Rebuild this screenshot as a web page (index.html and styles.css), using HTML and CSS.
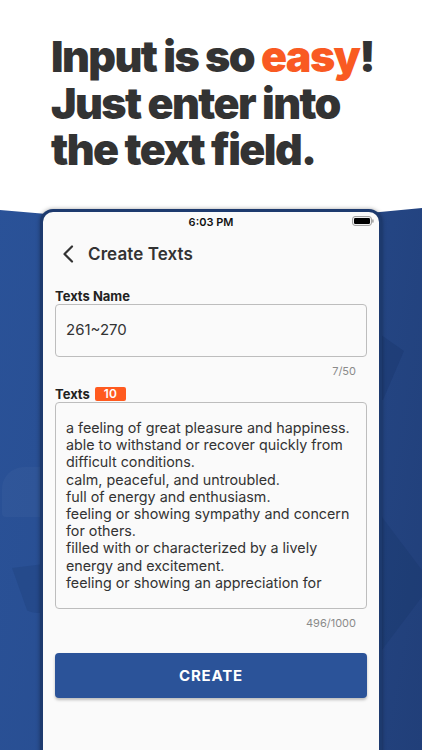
FILE: index.html
```html
<!DOCTYPE html>
<html lang="en">
<head>
<meta charset="utf-8">
<title>Create Texts</title>
<link rel="stylesheet" href="styles.css">
</head>
<body>
<div class="page">
  <h1 class="headline">Input is so <span class="accent">easy</span>!<br>Just enter into<br>the text field.</h1>
  <div class="stage">
    <div class="backdrop"></div>
    <div class="blob blob-a"></div>
    <div class="blob blob-b"></div>
    <div class="blob blob-c"></div>
    <div class="blob blob-d"></div>
    <div class="phone">
      <div class="status">
        <span class="time">6:03 PM</span>
        <svg class="battery" width="22" height="10" viewBox="0 0 22 10">
          <rect x="0.6" y="0.6" width="18.8" height="8.8" rx="2.4" fill="none" stroke="#999" stroke-width="1"/>
          <rect x="2" y="2" width="16" height="6" rx="1.2" fill="#000"/>
          <rect x="20.2" y="3.3" width="1.4" height="3.4" rx="0.6" fill="#999"/>
        </svg>
      </div>
      <div class="appbar">
        <svg class="back" width="12" height="18" viewBox="0 0 12 18">
          <path d="M10 1.5 L2.5 9 L10 16.5" fill="none" stroke="#333" stroke-width="2.2" stroke-linecap="round" stroke-linejoin="round"/>
        </svg>
        <span class="title">Create Texts</span>
      </div>
      <div class="form">
        <div class="label">Texts Name</div>
        <div class="field field-name">261~270</div>
        <div class="counter">7/50</div>
        <div class="label label-row">Texts <span class="badge">10</span></div>
        <div class="field field-area">a feeling of great pleasure and happiness.<br>able to withstand or recover quickly from difficult conditions.<br>calm, peaceful, and untroubled.<br>full of energy and enthusiasm.<br>feeling or showing sympathy and concern for others.<br>filled with or characterized by a lively energy and excitement.<br>feeling or showing an appreciation for</div>
        <div class="counter">496/1000</div>
        <div class="button">CREATE</div>
      </div>
    </div>
  </div>
</div>
</body>
</html>
```

FILE: styles.css
```css
html, body {
  margin: 0;
  padding: 0;
}
body {
  width: 422px;
  height: 750px;
  overflow: hidden;
  background: #ffffff;
  font-family: Inter, "Noto Sans", "Liberation Sans", sans-serif;
  color: #333333;
}
.page {
  width: 422px;
  height: 750px;
  display: flex;
  flex-direction: column;
}
.headline {
  flex-shrink: 0;
  margin: 0;
  padding: 33px 0 0 51px;
  height: 180px;
  box-sizing: border-box;
  font-family: Inter, "Liberation Sans", sans-serif;
  font-weight: 900;
  font-size: 43px;
  line-height: 46.5px;
  letter-spacing: -1.6px;
  color: #333333;
}
.accent {
  color: #f95a22;
}
.stage {
  position: relative;
  flex: 1;
  min-height: 0;
  padding-top: 29px;
}
.backdrop {
  position: absolute;
  left: 0;
  right: 0;
  top: 0;
  bottom: 0;
  background: linear-gradient(100deg, #2a5298 0%, #284d90 45%, #213f79 100%);
  clip-path: polygon(0 30px, 50% 48px, 100% 28px, 100% 100%, 0 100%);
}
.blob {
  position: absolute;
}
.blob-a {
  left: 2px;
  top: 287px;
  width: 60px;
  height: 50px;
  border-radius: 22px 0 0 4px;
  background: rgba(255, 255, 255, 0.03);
}
.blob-b {
  left: 12px;
  top: 383px;
  width: 40px;
  height: 50px;
  border-radius: 0 0 0 26px;
  background: rgba(10, 30, 70, 0.12);
  clip-path: polygon(0 10%, 100% 0, 100% 100%, 40% 100%);
}
.blob-c {
  right: 18px;
  top: 150px;
  width: 30px;
  height: 70px;
  background: rgba(10, 30, 70, 0.14);
  clip-path: polygon(0 0, 100% 30%, 30% 100%, 0 100%);
}
.blob-d {
  right: 0;
  top: 337px;
  width: 40px;
  height: 133px;
  background: rgba(10, 30, 70, 0.12);
  clip-path: polygon(0 0, 100% 40%, 100% 60%, 0 100%);
}
.phone {
  position: relative;
  margin-left: 40px;
  width: 342px;
  height: 560px;
  box-sizing: border-box;
  border: 3px solid #1d3a6e;
  border-bottom: none;
  border-radius: 13px 13px 0 0;
  background: #fafafa;
  box-shadow: 0 0 4px rgba(0, 0, 0, 0.35);
}
.status {
  height: 20px;
  display: flex;
  align-items: center;
  justify-content: center;
  position: relative;
}
.time {
  font-size: 11px;
  font-weight: 600;
  color: #111111;
  line-height: 14px;
}
.battery {
  position: absolute;
  right: 5px;
  top: 4px;
}
.appbar {
  height: 44px;
  display: flex;
  align-items: center;
  padding-left: 19px;
}
.back {
  margin-right: 14px;
}
.title {
  font-size: 17px;
  font-weight: 600;
  color: #333333;
  letter-spacing: 0.1px;
}
.form {
  padding: 12px 12px 0 12px;
  display: flex;
  flex-direction: column;
}
.label {
  font-size: 13px;
  font-weight: 700;
  line-height: 16px;
  color: #222222;
}
.label-row {
  display: flex;
  align-items: center;
}
.badge {
  display: inline-block;
  margin-left: 5px;
  background: #ff5a1f;
  color: #ffffff;
  font-size: 12px;
  font-weight: 600;
  line-height: 14px;
  padding: 0 9px;
  border-radius: 2px;
}
.field {
  box-sizing: border-box;
  border: 1px solid #bdbdbd;
  border-radius: 4px;
  background: #fafafa;
  color: #333333;
}
.field-name {
  height: 53px;
  font-size: 15px;
  line-height: 20px;
  padding: 15px 10px;
}
.field-area {
  height: 207px;
  font-size: 14.3px;
  line-height: 17.2px;
  padding: 16px 10px 0 10px;
}
.counter {
  margin-top: 7px;
  height: 14px;
  line-height: 14px;
  font-size: 11px;
  color: #8a8a8a;
  text-align: right;
  padding-right: 11px;
  margin-bottom: 8px;
}
.button {
  margin-top: 15px;
  height: 45px;
  border-radius: 4px;
  background: #2b5399;
  color: #ffffff;
  font-size: 15px;
  font-weight: 700;
  letter-spacing: 0.8px;
  display: flex;
  align-items: center;
  justify-content: center;
  box-shadow: 0 2px 3px rgba(0, 0, 0, 0.25);
}
```
